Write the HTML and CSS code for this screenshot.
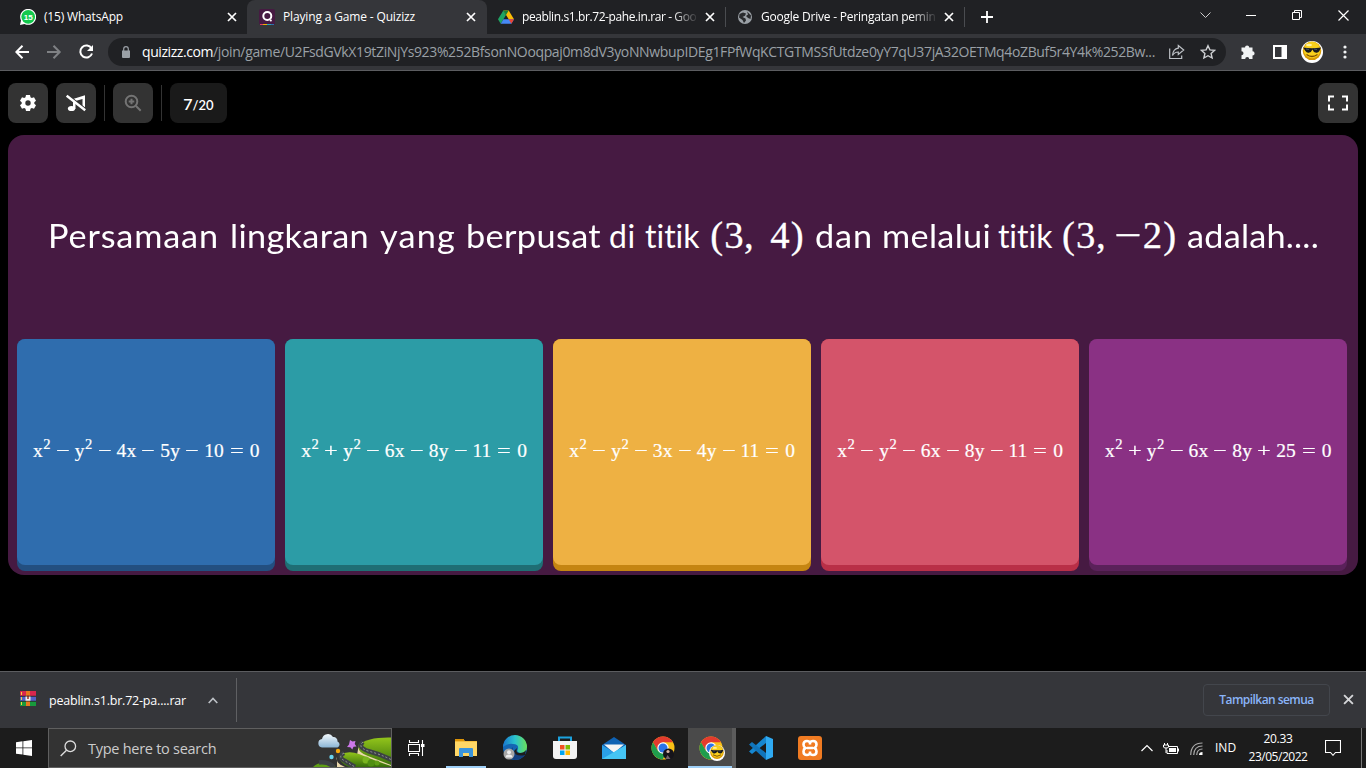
FILE: index.html
```html
<!DOCTYPE html>
<html lang="id">
<head>
<meta charset="utf-8">
<title>Playing a Game - Quizizz</title>
<link rel="stylesheet" href="styles.css">
</head>
<body>
<svg class="defs" width="0" height="0">
  <defs>
    <symbol id="close" viewBox="0 0 10 10"><path d="M1 1l8 8M9 1l-8 8" fill="none" stroke="currentColor" stroke-width="1.7"/></symbol>
    <symbol id="smiley" viewBox="0 0 22 22">
      <circle cx="11" cy="11" r="11" fill="#fff"/><circle cx="11" cy="9.8" r="9.3" fill="#d99a04"/><circle cx="11" cy="9" r="8.3" fill="#f8cf1c"/>
      <ellipse cx="8" cy="4" rx="3" ry="1.2" fill="#fff3a0"/><path d="M2 6.5q4.500.8 9 .8t9-.8l-1.600 3.500q-1.300 2.200-4 1.500-2-.5-3-3-1 2.500-3 3-2.700.7-4-1.500z" fill="#17191f"/>
      <path d="M5 8l3 .5M13 8l3 .5" stroke="#456" stroke-width="1"/><path d="M5.500 13.500q5.500 4 11 0" fill="none" stroke="#7d4c00" stroke-width="1.300"/>
    </symbol>
    <symbol id="chrome" viewBox="0 0 24 24">
      <circle cx="12" cy="12" r="11.500" fill="#fbc116"/><path d="M2 6.300A11.500 11.500 0 0 1 22 6.300H12L7 15z" fill="#e33b2e"/><path d="M2 6.300A11.500 11.500 0 0 0 11.500 23.500L17 14.700 7 15z" fill="#1f9d4d"/>
      <circle cx="12" cy="12" r="5.700" fill="#fff"/><circle cx="12" cy="12" r="4.500" fill="#2b74e8"/>
    </symbol>
  </defs>
</svg>

<header class="tabs">
  <div class="tab tab1">
    <svg class="fav" viewBox="0 0 16 16"><path d="M0 16l1-4.500A8 8 0 1 1 4.500 15z" fill="#fff"/><circle cx="8.200" cy="7.800" r="6.900" fill="#12c94d"/><text x="8.200" y="10.600" text-anchor="middle" class="badge">15</text></svg>
    <span class="title"><b class="f-wa">(15) WhatsApp</b></span>
    <svg class="x"><use href="#close"/></svg>
  </div>
  <div class="tab tab2">
    <svg class="fav" viewBox="0 0 16 16"><rect width="16" height="16" rx="2" fill="#461a42"/><circle cx="8.300" cy="7" r="4" fill="none" stroke="#fff" stroke-width="2"/><circle cx="11.800" cy="11.500" r="1.100" fill="#fff"/><path d="M1 15.500h3" stroke="#e23c64"/><path d="M4 15.500h4" stroke="#eeb000"/><path d="M8 15.500h4" stroke="#2aa6b0"/><path d="M12 15.500h3" stroke="#2f6dae"/></svg>
    <span class="title"><b class="f-qz">Playing a Game - Quizizz</b></span>
    <svg class="x"><use href="#close"/></svg>
  </div>
  <div class="tab tab3">
    <svg class="fav" viewBox="0 0 16 16"><path d="M5.300 1.500h5.400L16 10.300h-5.300z" fill="#fbbc05"/><path d="M5.300 1.500L8 6 2.700 14.800 0 10.300z" fill="#1fa463"/><path d="M5.300 1.500h5.400L8 6z" fill="#188038"/><path d="M5.400 10.300H16l-2.700 4.500H2.700z" fill="#4688f4"/><path d="M10.700 10.300H16l-2.700 4.500z" fill="#ea4335"/></svg>
    <span class="title fade"><b class="f-dr">peablin.s1.br.72-pahe.in.rar - Goo</b></span>
    <svg class="x"><use href="#close"/></svg>
  </div>
  <div class="tab tab4">
    <svg class="fav" viewBox="0 0 16 16"><circle cx="8" cy="8" r="7" fill="#9aa0a6"/><path d="M2.500 5L6 3.500l3 1-1 2.200L5.500 8l3 1.500.5 2L7 14 5.500 11 2 8.500zM10 2.500l4 4-.5 3.500-2.500-1-2-2 2-1.500z" fill="#292b2e"/></svg>
    <span class="title fade"><b class="f-gd">Google Drive - Peringatan pemin</b></span>
    <svg class="x"><use href="#close"/></svg>
  </div>
  <svg class="plus" viewBox="0 0 12 12"><path d="M6 0v12M0 6h12" stroke="#fff" stroke-width="1.800"/></svg>
  <svg class="win" viewBox="0 0 150 16"><g fill="none" stroke="#fff"><path d="M.5 5.500l5 5 5-5" stroke="#ccc"/><path d="M46 8.500h10"/><path d="M92.500 5.500h7v7h-7zM94.500 5.500v-2h7v7h-2"/><path d="M138.500 3.500l10 10M148.500 3.500l-10 10" stroke-width="1.200"/></g></svg>
</header>

<div class="toolbar">
  <svg class="nav" viewBox="0 0 80 16"><g fill="none" stroke-width="2"><path d="M14 8H1.500M7.500 1.700L1.300 8l6.200 6.300" stroke="#fff"/><path d="M32 8h12.500M38.500 1.700L44.700 8l-6.200 6.300" stroke="#7f8184"/><path d="M76.500 4.500A6 6 0 1 0 77 9.500" stroke="#fff"/></g><path d="M78 1v6h-6z" fill="#fff"/></svg>
  <div class="omni">
    <svg class="lock" viewBox="0 0 8 12"><path d="M0 4.500h8V11q0 1-1 1H1q-1 0-1-1z" fill="#9aa0a6"/><path d="M1.700 5V3a2.300 2.300 0 0 1 4.600 0v2" fill="none" stroke="#9aa0a6" stroke-width="1.200"/></svg>
    <span class="url"><b class="host f-u1">quizizz.com</b><b class="f-u2">/join/game/U2FsdGVkX19tZiNjYs923%252BfsonNOoqpaj0m8dV3yoNNwbupIDEg1FPfWqKCTGTMSSfUtdze0yY7qU37jA32OETMq4oZBuf5r4Y4k%252Bw...</b></span>
    <svg class="share" viewBox="0 0 16 16"><path d="M.7 4.500v10h12v-3" fill="none" stroke="#bdc1c6" stroke-width="1.200"/><path d="M9.300 1.500l5.400 4.500-5.400 4.500V8Q5.500 8 3.500 11.500 4 5 9.300 4.200z" fill="none" stroke="#bdc1c6" stroke-width="1.200"/></svg>
    <svg class="star" viewBox="0 0 16 16"><path d="M8 1.700l1.900 4.200 4.600.5-3.400 3 1 4.600L8 11.700 3.900 14l1-4.600-3.400-3 4.600-.5z" fill="none" stroke="#cfd1d4" stroke-width="1.400"/></svg>
  </div>
  <svg class="ext" viewBox="0 0 16 16"><path d="M1.500 3.500H5a2.100 2.100 0 1 1 4.200 0h3.300v3.800a2.100 2.100 0 1 1 0 4.200V15H9.200a2 2 0 0 0-4 0H1.500v-3.800a2 2 0 0 0 0-4z" fill="#f1f3f4"/></svg>
  <svg class="side" viewBox="0 0 14 14"><path d="M1 1h12v12H1z" fill="none" stroke="#fff" stroke-width="2"/><path d="M8.500 1H13v12H8.500z" fill="#fff"/></svg>
  <svg class="avatar"><use href="#smiley"/></svg>
  <svg class="dots" viewBox="0 0 4 14"><g fill="#f1f3f4"><circle cx="2" cy="2" r="1.600"/><circle cx="2" cy="7" r="1.600"/><circle cx="2" cy="12" r="1.600"/></g></svg>
</div>

<main class="page">
  <div class="controls">
    <div class="btn"><svg width="16" height="16" viewBox="0 0 16 16"><path d="M6 0h4l.5 2.300 1.300.8 2.200-.8 2 3.400-1.700 1.500v1.600L16 10.300l-2 3.400-2.200-.8-1.300.8L10 16H6l-.5-2.300-1.300-.8-2.200.8-2-3.400 1.700-1.500V7.200L0 5.700l2-3.400 2.200.8 1.300-.8zM8 5.300a2.700 2.700 0 1 0 0 5.400 2.700 2.700 0 0 0 0-5.400z" fill="#fff" fill-rule="evenodd"/></svg></div>
    <div class="btn"><svg width="20" height="18" viewBox="0 0 20 18"><path d="M7 5L19 1.200v13h-2.500V5L9.500 7v8H7z" fill="#fff"/><ellipse cx="5.500" cy="14.500" rx="3.600" ry="2.600" fill="#fff"/><path d="M1.500.500l18 14" stroke="#333" stroke-width="1.200"/><path d="M.7 1.700l18.500 14.500" stroke="#fff" stroke-width="2.400"/></svg></div>
    <i class="rule"></i>
    <div class="btn"><svg width="18" height="18" viewBox="0 0 18 18"><g fill="none" stroke="#747474" stroke-width="2"><circle cx="7.500" cy="7.500" r="5.800"/><path d="M12 12l4.700 4.700M7.500 4.700v5.600M4.700 7.500h5.600"/></g></svg></div>
    <i class="rule"></i>
    <div class="count"><span>7</span><small>/20</small></div>
    <div class="btn full"><svg width="22" height="16" viewBox="0 0 22 16"><path d="M7 1.500H2v5M2 9.500v5h5M15 1.500h5v5M20 9.500v5h-5" fill="none" stroke="#fff" stroke-width="2"/></svg></div>
  </div>
  <section class="card">
    <h1 class="question"><span class="w1"><b class="wide f-q1">Persamaan</b></span><span class="w2"><b class="wide f-q2">lingkaran</b></span><span class="w3"><b class="wide f-q3">yang</b></span><span class="w4"><b class="wide f-q4">berpusat</b></span><span class="w5"><b class="f-q5">di</b></span><span class="w6"><b>titik</b></span><span class="math"><i class="par">(</i>3<i class="com">,</i><i class="sp"></i>4<i class="par">)</i></span><span class="w7"><b class="wide f-q7">dan</b></span><span class="w8"><b class="wide f-q8">melalui</b></span><span class="w9"><b>titik</b></span><span class="math"><i class="par">(</i>3<i class="com">,</i><i class="thin"></i><i class="minus">−</i>2<i class="par">)</i></span><span class="w10"><b class="wide f-q10">adalah....</b></span></h1>
    <div class="answers">
      <div class="ans blue"><p><i>x</i><sup>2</sup><u>−</u><i>y</i><sup>2</sup><u>−</u>4<i>x</i><u>−</u>5<i>y</i><u>−</u>10<s>=</s>0</p></div>
      <div class="ans teal"><p><i>x</i><sup>2</sup><u>+</u><i>y</i><sup>2</sup><u>−</u>6<i>x</i><u>−</u>8<i>y</i><u>−</u>11<s>=</s>0</p></div>
      <div class="ans gold"><p><i>x</i><sup>2</sup><u>−</u><i>y</i><sup>2</sup><u>−</u>3<i>x</i><u>−</u>4<i>y</i><u>−</u>11<s>=</s>0</p></div>
      <div class="ans rose"><p><i>x</i><sup>2</sup><u>−</u><i>y</i><sup>2</sup><u>−</u>6<i>x</i><u>−</u>8<i>y</i><u>−</u>11<s>=</s>0</p></div>
      <div class="ans plum"><p><i>x</i><sup>2</sup><u>+</u><i>y</i><sup>2</sup><u>−</u>6<i>x</i><u>−</u>8<i>y</i><u>+</u>25<s>=</s>0</p></div>
    </div>
  </section>
</main>

<div class="downloads">
  <svg class="rar" viewBox="0 0 16 16"><path d="M0 0h16v5H0z" fill="#d8274e"/><path d="M0 5.500h16v4.500H0z" fill="#5560c8"/><path d="M0 10.500h16V15H0z" fill="#189a3c"/><path d="M6 0h4v15H6z" fill="#e8791e"/><path d="M5.500 5h5v5h-5z" fill="#eee"/><path d="M8 4.500V8" stroke="#a52a20" stroke-width="1.500"/><path d="M1.500 1v3M1.500 6v3M1.500 11v3" stroke="#f7ce3c"/><path d="M0 5.200h16M0 10.200h16" stroke="#252525" stroke-width=".7"/></svg>
  <span class="file"><b class="f-dl">peablin.s1.br.72-pa....rar</b></span>
  <svg class="up" viewBox="0 0 10 7"><path d="M.7 6L5 1.500 9.300 6" fill="none" stroke="#bdc1c6" stroke-width="1.600"/></svg>
  <i class="sep"></i>
  <div class="showall"><b class="f-sa">Tampilkan semua</b></div>
  <svg class="dx" viewBox="0 0 10 10"><use href="#close"/></svg>
</div>

<footer class="taskbar">
  <svg class="start" viewBox="0 0 16 16"><path d="M0 2.200l6.500-.9v6.200H0zM7.300 1.200L16 0v7.500H7.300zM0 8.300h6.500v6.300L0 13.700zM7.300 8.300H16V16l-8.700-1.200z" fill="#fff"/></svg>
  <div class="search">
    <svg class="glass" viewBox="0 0 17 17"><circle cx="10.300" cy="6.300" r="5.300" fill="none" stroke="#ddd" stroke-width="1.300"/><path d="M6.500 10.200L.7 16" stroke="#ddd" stroke-width="1.400"/></svg>
    <span class="ph"><b class="f-ph">Type here to search</b></span>
    <svg class="art" viewBox="0 0 78 38"><defs><linearGradient id="hill" x2="0" y2="1"><stop offset="0" stop-color="#93c51b"/><stop offset="1" stop-color="#356d0b"/></linearGradient><linearGradient id="cl" x2="0" y2="1"><stop offset="0" stop-color="#f2f8fc"/><stop offset="1" stop-color="#8bb5d5"/></linearGradient></defs>
      <path d="M9 18.500a4.300 4.300 0 0 1 0-8.500 6 6 0 0 1 11-2 4 4 0 0 1 4.500 4.500 3.200 3.200 0 0 1 0 6z" fill="url(#cl)"/>
      <path d="M37 11l2.500 1.500 3-.5-.8 3 1.800 2.500-3 .2-1.200 2.800-2-2.200-3.300-.3 2-2.500z" fill="#cd78ea"/><circle cx="25" cy="22" r="2.200" fill="#f6a70b"/><circle cx="18.500" cy="28" r="2.200" fill="#6ad3ef"/>
      <path d="M46 16Q54 8 78 8.500V38H50q-6-12-4-22z" fill="url(#hill)"/>
      <path d="M46 15q-3 8 9 12l23 9v2H56L44 26z" fill="#ead9ac"/>
      <path d="M24 28q-2 6 8 10h-8z" fill="#ead9ac"/>
      <path d="M26 26q9-5 20-1 14 6 32 12v1H36q-10-4-10-12z" fill="url(#hill)"/>
      <path d="M0 38q4-4 9-4l14 4z" fill="#5e9e15"/>
      <path d="M50 13q-6 5 5 9 12 3 24 9M31 24q-7 4 1 8l10 6M6 33.500q9-1 15 4.500" fill="none" stroke="#3c4145" stroke-width="4.500"/><path d="M50 13q-6 5 5 9 12 3 24 9M31 24q-7 4 1 8l10 6" fill="none" stroke="#ccc" stroke-width=".6" stroke-dasharray="2 2"/>
      <circle cx="53" cy="31" r="3.500" fill="#79b51f"/><circle cx="58" cy="34" r="3.500" fill="#508f12"/><circle cx="64" cy="34" r="2.500" fill="#5e9e15"/>
    </svg>
  </div>
  <div class="slot first"><svg width="18" height="16" viewBox="0 0 18 16"><path d="M1.500 0v2.500h9V0M1.500 16v-2.500h9V16M.5 4.500h11v7H.5zM14.500 0v16" fill="none" stroke="#fff" stroke-width="1.100"/><path d="M13 4h3.500v3H13z" fill="#fff"/></svg></div>
  <div class="slot open"><svg width="22" height="20" viewBox="0 0 22 20"><path d="M0 1h8l2 2h12v15H0z" fill="#f5be3f"/><path d="M0 1h9v2H0z" fill="#dc9307"/><path d="M0 4h22v14H0z" fill="#ffd766"/><path d="M4 19v-8q0-1 1-1h12q1 0 1 1v8h-4v-4H8v4z" fill="#3a94dc"/></svg></div>
  <div class="slot"><svg width="26" height="26" viewBox="0 0 26 26"><defs><linearGradient id="ed"><stop offset="0" stop-color="#1976cf"/><stop offset=".5" stop-color="#2ac3ce"/><stop offset="1" stop-color="#6be05a"/></linearGradient></defs><circle cx="13" cy="13" r="12" fill="#1466b4"/><path d="M1 12A12 12 0 0 1 25 12q0 6-7 6-4-1-2-4 1-5-5-5-5-1-10 3z" fill="url(#ed)"/><path d="M11 12q-2 9 12 8-4 5-11 5-9-4-1-13z" fill="#123f7f"/><path d="M15 13q-2 5 3 5 4 0 6-3l-1 5q-10 2-11-4z" fill="#1c1c1c"/><circle cx="7" cy="19" r="5.500" fill="#a7a7a7"/><circle cx="7" cy="17.300" r="2" fill="#ececec"/><path d="M3.500 22.500q0-3 3.500-3t3.500 3z" fill="#ececec"/></svg></div>
  <div class="slot"><svg width="24" height="24" viewBox="0 0 24 24"><path d="M6 6V1.500h12V6" fill="none" stroke="#1ba2de" stroke-width="2"/><path d="M0 5h24v15q0 3-3 3H3q-3 0-3-3z" fill="#f3f3f3"/><path d="M7 9h4.500v4.500H7z" fill="#f25022"/><path d="M12.500 9H17v4.500h-4.500z" fill="#7fba00"/><path d="M7 14.500h4.500V19H7z" fill="#00a4ef"/><path d="M12.500 14.500H17V19h-4.500z" fill="#ffb900"/></svg></div>
  <div class="slot"><svg width="24" height="24" viewBox="0 0 24 24"><path d="M0 9L12 1l12 8v14H0z" fill="#0f62b3"/><path d="M2 8.500h20L12 17z" fill="#f4f4f4"/><path d="M0 9l12 7.500L24 9v14H0z" fill="#2a9fe6"/><path d="M0 23l24-14v14z" fill="#45c5f5"/></svg></div>
  <div class="slot"><svg width="24" height="24"><use href="#chrome"/><circle cx="17.500" cy="18" r="5.500" fill="#16141a"/><circle cx="17" cy="15.500" r="1.600" fill="#d9b5a5"/><path d="M14.500 23l2-4 3 4z" fill="#75646c"/></svg></div>
  <div class="slot active"><svg width="26" height="25" viewBox="0 0 26 25"><svg width="24" height="24"><use href="#chrome"/></svg><svg x="10" y="9" width="16" height="16" viewBox="0 0 22 22"><use href="#smiley" width="22" height="22"/></svg></svg></div>
  <div class="slot"><svg width="24" height="24" viewBox="0 0 24 24"><path d="M17 0v7L3 18l-3-2.500z" fill="#1687d1"/><path d="M17 24v-7L3 6 0 8.500z" fill="#1175bb"/><path d="M17 0l7 3v18l-7 3z" fill="#2faaf2"/></svg></div>
  <div class="slot"><svg width="24" height="24" viewBox="0 0 24 24"><rect width="24" height="24" rx="3" fill="#f07b22"/><path d="M12 8.500V6.500q-1-1.500-3-1.500-3.500 0-3.500 3.500 0 2.500 2 3.500-2 1-2 3.500Q5.500 19 9 19q2 0 3-1.500v-2M12 8.500V6.500Q13 5 15 5q3.500 0 3.500 3.500 0 2.500-2 3.500 2 1 2 3.500Q18.500 19 15 19q-2 0-3-1.500M9 12h6" fill="none" stroke="#fff" stroke-width="2.600"/></svg></div>
  <div class="tray">
    <svg class="t1" viewBox="0 0 12 8"><path d="M.5 7L6 1.500 11.500 7" fill="none" stroke="#fff" stroke-width="1.200"/></svg>
    <svg class="t2" viewBox="0 0 16 11"><path d="M5 3.500h9.500v7H4V7" fill="none" stroke="#fff"/><path d="M6 5h7v4H6zM15 5.500h1v3h-1z" fill="#fff"/><path d="M1.500 0v2M4.500 0v2M.5 2h5v2q0 1-2.500 1T.5 4zM3 5v5" fill="none" stroke="#fff"/></svg>
    <svg class="t3" viewBox="0 0 13 13"><g fill="none" stroke="#aaa" stroke-width="1.200"><path d="M.7 13Q1 1 12.500 1M3.700 13Q4 4 12.500 4M6.700 13Q7 7 12.500 7"/></g><path d="M9 13q0-3 3.500-3v3z" fill="#fff"/></svg>
    <span class="lang"><b>IND</b></span>
    <div class="clock"><b class="f-t1">20.33</b><b class="f-t2">23/05/2022</b></div>
    <svg class="note" viewBox="0 0 16 16"><path d="M.5.500h15v12h-5L8 15.300 5.500 12.500h-5z" fill="none" stroke="#fff" stroke-width="1.100"/></svg>
    <i class="peek"></i>
  </div>
</footer>
</body>
</html>
```
FILE: styles.css
```css
* { box-sizing: border-box; }
body { margin: 0; width: 1366px; height: 768px; overflow: hidden; background: #000; color: #fff; font: 12px/16px "Open Sans", "Noto Sans", sans-serif; display: flex; flex-direction: column; }
b { font-weight: inherit; white-space: nowrap; display: inline-block; }
svg { display: block; flex: none; }
.defs { position: absolute; }

/* letter spacing per label */
.f-wa { letter-spacing: -.177px; }
.f-qz { letter-spacing: -.154px; }
.f-dr { letter-spacing: -.4px; }
.f-gd { letter-spacing: -.22px; }
.f-u1 { letter-spacing: -.43px; }
.f-u2 { letter-spacing: -.36px; }
.f-q1 { letter-spacing: .8px; }
.f-q2 { letter-spacing: .32px; }
.f-q3 { letter-spacing: 1.1px; }
.f-q4 { letter-spacing: .36px; }
.f-q5 { letter-spacing: .6px; }
.f-q7 { letter-spacing: .83px; }
.f-q8 { letter-spacing: .31px; }
.f-q10 { letter-spacing: .21px; }
.f-dl { letter-spacing: -.2px; }
.f-sa { letter-spacing: -.56px; }
.f-ph { letter-spacing: -.27px; }
.f-t1 { letter-spacing: -.322px; }
.f-t2 { letter-spacing: -.47px; }

.tabs { height: 34px; flex: none; display: flex; align-items: center; background: #202124; }
.tab { height: 34px; display: flex; align-items: center; flex: none; }
.tab1 { width: 247px; padding-left: 20px; }
.tab2 { width: 240px; padding-left: 12px; background: #35363a; border-radius: 8px 8px 0 0; }
.tab3 { width: 239px; padding-left: 11px; }
.tab4 { width: 239px; padding-left: 11px; }
.tab3::after, .tab4::after { content: ""; width: 1px; height: 20px; background: #4a4c50; margin-left: auto; }
.fav { width: 16px; height: 16px; margin-right: 8px; }
.badge { font: bold 8px "Liberation Sans", sans-serif; fill: #fff; }
.title { width: 181px; height: 18px; line-height: 18px; margin-right: 2px; }
.tab3 .title, .tab4 .title { width: 175px; margin-right: 8px; }
.fade { mask-image: linear-gradient(90deg, #000 150px, transparent 177px); }
.x { width: 10px; height: 10px; }
.plus { width: 12px; height: 12px; margin-left: 16px; }
.win { width: 150px; height: 16px; margin: -5px 16px 0 auto; overflow: visible; }

.toolbar { height: 37px; flex: none; display: flex; align-items: center; background: #35363a; border-bottom: 1px solid #5c5d60; padding-left: 15px; }
.nav { width: 80px; height: 16px; }
.omni { width: 1118px; height: 28px; margin-left: 13px; border-radius: 14px; background: #202124; display: flex; align-items: center; }
.lock { width: 8px; height: 12px; margin-left: 14px; }
.url { width: 1014px; margin-left: 12px; font-size: 14px; color: #9aa0a6; white-space: nowrap; }
.host { color: #fff; }
.share { width: 16px; height: 16px; margin-left: 13px; }
.star { width: 16px; height: 16px; margin-left: 15px; }
.ext { width: 16px; height: 16px; margin-left: 14px; }
.side { width: 14px; height: 14px; margin-left: 17px; }
.avatar { width: 22px; height: 22px; margin-left: 14px; }
.dots { width: 4px; height: 14px; margin-left: 20px; }

.page { height: 600px; flex: none; padding: 12px 8px 0; background: #000; }
.controls { display: flex; align-items: center; gap: 8px; height: 40px; }
.btn { width: 40px; height: 40px; border-radius: 8px; background: #333; display: flex; align-items: center; justify-content: center; }
.rule { width: 1px; height: 36px; background: #333; }
.count { width: 57px; height: 40px; border-radius: 8px; background: #1a1a1a; display: flex; align-items: baseline; justify-content: center; font: 600 16px/42px Lato, sans-serif; }
.count small { font-size: 13px; }
.full { margin-left: auto; }
.card { width: 1350px; height: 440px; margin-top: 12px; background: #461a42; border-radius: 16px; padding: 75px 9px 0; }
.question { margin: 0 0 0 31px; height: 50px; display: flex; align-items: baseline; font: 400 32px/50px Lato, sans-serif; white-space: nowrap; font-variant-ligatures: none; }
.question span { flex: none; }
.wide { transform: scaleX(1.07); transform-origin: 0 0; }
.w1 { width: 182px; }
.w2 { width: 150px; }
.w3 { width: 86px; }
.w4 { width: 143px; }
.w5 { width: 36px; }
.w6 { width: 64px; }
.w7 { width: 67px; margin-left: 10px; }
.w8 { width: 116px; }
.w9 { width: 63px; }
.w10 { margin-left: 10px; }
.math { font: 38.72px/50px "Liberation Serif", serif; -webkit-text-stroke: .3px #fff; }
.math i { display: inline-block; font-style: normal; text-align: center; }
.math .par { width: 15.200px; }
.math .com { width: 10.800px; }
.math .sp { width: 16px; }
.math .thin { width: 6.400px; }
.math .minus { width: 30px; transform: scaleX(1.25); }
.answers { display: flex; gap: 10px; margin-top: 79px; }
.ans { width: 258px; height: 232px; border-radius: 8px; padding-bottom: 6px; display: flex; }
.ans p { flex: 1; margin: 0; border-radius: 8px; display: flex; align-items: baseline; justify-content: center; padding-top: 99px; font: 19.500px/26px "Liberation Serif", serif; -webkit-text-stroke: .2px #fff; }
.ans i { width: .528em; font-style: normal; text-align: center; }
.ans sup { width: 7.800px; font-size: 14.600px; line-height: 13px; position: relative; top: -8px; vertical-align: baseline; text-align: center; }
.ans u { width: 1.222em; text-decoration: none; text-align: center; transform: scaleX(1.25); }
.ans s { width: 1.333em; text-decoration: none; text-align: center; transform: scaleX(1.25); }
.blue { background: #234f80; } .blue p { background: #2f6dae; }
.teal { background: #1f6e74; } .teal p { background: #2c9ca6; }
.gold { background: #c58512; } .gold p { background: #eeb143; }
.rose { background: #b92f47; } .rose p { background: #d4546a; }
.plum { background: #5a215a; } .plum p { background: #8a3184; }

.downloads { height: 57px; flex: none; display: flex; align-items: center; background: #35363a; border-top: 1px solid #5c5d60; padding-left: 20px; }
.rar { width: 16px; height: 16px; margin-top: -3px; }
.file { width: 147px; margin-left: 13px; padding-top: 2px; font-size: 12.500px; }
.up { width: 10px; height: 7px; margin-left: 12px; }
.sep { width: 1px; height: 44px; background: #5f6063; margin-left: 18px; }
.showall { width: 127px; height: 32px; margin-left: 966px; border: 1px solid #43464c; border-radius: 4px; display: flex; align-items: center; justify-content: center; color: #8ab4f8; font-weight: 600; }
.dx { width: 11px; height: 11px; margin: -2px 0 0 13px; color: #d5d6d8; }

.taskbar { height: 40px; flex: none; display: flex; align-items: center; background: #1c1c1c; }
.start { width: 16px; height: 16px; margin: 0 16px; }
.search { width: 344px; height: 40px; background: #333; border: 1px solid #5f5f5f; display: flex; align-items: center; padding-left: 11px; flex: none; }
.glass { width: 17px; height: 17px; }
.ph { margin-left: 11px; padding-top: 1px; font-size: 14.500px; color: #ccc; }
.art { width: 78px; height: 38px; margin-left: auto; }
.slot { width: 49.200px; height: 40px; display: flex; align-items: center; justify-content: center; flex: none; }
.first { margin-right: .4px; }
.open { box-shadow: inset 0 -2px #9fd0f8; width: 40px; margin: 0 4.600px; }
.active { background: #4a4a4a; box-shadow: inset 0 -2px #9fd0f8; border-right: 4px solid #5c5c5c; width: 48.500px; padding-left: 5px; }
.tray { margin-left: auto; display: flex; align-items: center; height: 40px; }
.t1 { width: 12px; height: 8px; }
.t2 { width: 16px; height: 11px; margin-left: 10px; }
.t3 { width: 13px; height: 13px; margin-left: 11px; }
.lang { margin-left: 12px; width: 34px; }
.clock { width: 58px; display: flex; flex-direction: column; align-items: center; line-height: 18px; }
.note { width: 16px; height: 16px; margin-left: 18px; }
.peek { width: 1px; height: 40px; background: #777; margin: 0 4px 0 20px; }
```
